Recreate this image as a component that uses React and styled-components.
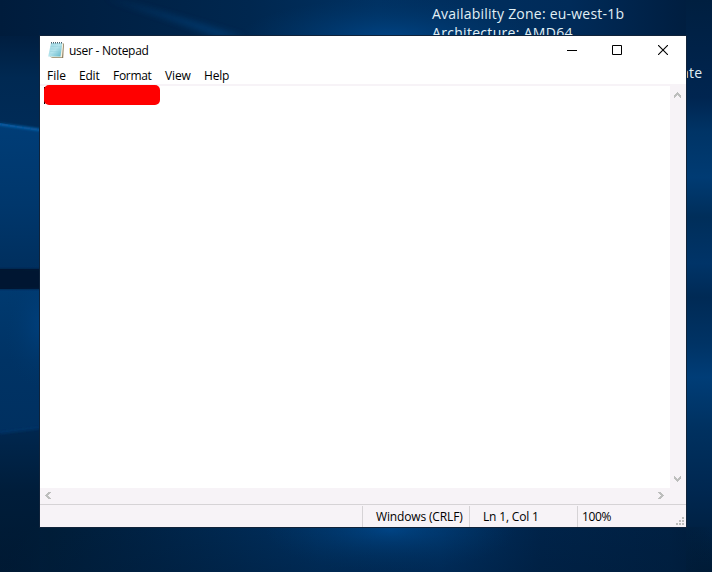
import React from "react";
import styled, { createGlobalStyle } from "styled-components";

const Global = createGlobalStyle`
  *{box-sizing:border-box}
  html,body{margin:0;overflow:hidden}
`;
const Desktop = styled.main`
  position:relative;width:712px;height:572px;overflow:hidden;
  padding:36px 26px 45px 40px;background:#00264f;
  font:12px/16px "Open Sans",sans-serif;color:#000;
`;
const Wallpaper = styled.svg`position:absolute;inset:0;display:block;`;
const DesktopText = styled.span`
  position:absolute;left:${p => p.$x}px;top:${p => p.$y}px;
  font:14px/20px "Open Sans",sans-serif;color:#e0f0f5;white-space:nowrap;
  letter-spacing:${p => p.$spacing || 0}px;
`;
const Window = styled.section`
  position:relative;width:646px;height:491px;background:#fff;
  box-shadow:0 0 0 1px #10233a;display:flex;flex-direction:column;
`;
const TitleBar = styled.header`height:30px;display:flex;align-items:flex-start;padding-left:8px;`;
const Title = styled.span`margin:7px 0 0 5px;flex:1;white-space:nowrap;letter-spacing:-.27px;`;
const AppIcon = styled.svg`display:block;margin-top:5px;`;
const Controls = styled.div`display:flex;`;
const WindowButton = styled.button`
  width:${p => p.$close ? 46 : 45}px;height:28px;border:0;background:none;
  padding:0 ${p => p.$close ? 0 : 1}px 0 0;
  display:flex;align-items:center;justify-content:center;
`;
const Menu = styled.nav`height:18px;display:flex;padding-left:7px;`;
const MenuItem = styled.span`width:${p => p.$w}px;line-height:20px;white-space:nowrap;letter-spacing:${p => p.$spacing || 0}px;`;
const Workspace = styled.div`
  height:404px;display:grid;grid-template-columns:630px 16px;
  border-top:2px solid #f7f3f7;
`;
const Editor = styled.div`position:relative;background:#fff;`;
const Caret = styled.i`position:absolute;left:4px;top:1px;width:1px;height:17px;background:#000;`;
const Redaction = styled.div`
  position:absolute;left:4px;top:-1px;width:116px;height:20px;border-radius:5px;background:#f00;
`;
const VerticalScroll = styled.div`
  background:#f7f3f7;display:flex;flex-direction:column;justify-content:space-between;
  align-items:flex-start;padding:6px 0 6px 4px;
`;
const HorizontalScroll = styled.div`
  height:16px;background:#f7f3f7;display:flex;justify-content:space-between;
  padding:4px 22px 0 5px;
`;
const Status = styled.footer`
  height:23px;border-top:1px solid #d6d3d6;background:#f7f3f7;
  display:grid;grid-template-columns:322px 107px 108px 1fr;
`;
const StatusCell = styled.span`
  margin:1px 0;border-left:${p => p.$plain ? "0" : "1px solid #d6d3d6"};
  padding-left:${p => p.$pad || 0}px;line-height:21px;white-space:nowrap;letter-spacing:${p => p.$spacing || 0}px;
`;
const ResizeGrip = styled.svg`position:absolute;right:2px;bottom:2px;display:block;`;

const arrows = {
  up: { w: 7, h: 6, d: "M3 0h1v1h1v1h1v1h1v3H6V5H5V4H4V3H3v1H2v1H1v1H0V3h1V2h1V1h1Z" },
  down: { w: 7, h: 6, d: "M0 0h1v1h1v1h1v1h1V2h1V1h1V0h1v3H6v1H5v1H4v1H3V5H2V4H1V3H0Z" },
  left: { w: 6, h: 7, d: "M0 3h1V2h1V1h1V0h3v1H5v1H4v1H3v1h1v1h1v1h1v1H3V6H2V5H1V4H0Z" },
  right: { w: 6, h: 7, d: "M6 3H5V2H4V1H3V0H0v1h1v1h1v1h1v1H2v1H1v1H0v1h3V6h1V5h1V4h1Z" }
};
const ScrollArrow = ({ direction }) => {
  const a = arrows[direction];
  return <svg width={a.w} height={a.h}><path d={a.d} fill="#bdbebd" /></svg>;
};
const NotepadIcon = () => (
  <AppIcon width="16" height="18" viewBox="0 0 16 18">
    <defs><linearGradient id="page" x2="1" y2="1"><stop stopColor="#9bd5e2"/><stop offset=".5" stopColor="#b5e4ed"/><stop offset="1" stopColor="#55b2c7"/></linearGradient></defs>
    <path d="M5 2.6h11l-.8 14.4H4.5L2 15.7Z" fill="#8f8063"/>
    <path d="M4.5 2.2h10.8L14 16.2 4 16.3 1 15Z" fill="#f5f1df"/>
    <path d="M3 2h11.3L12.5 15.5H.2Z" fill="url(#page)"/>
    <path d="m2.6 5.5 11 .2M2.3 8l11 .2M2 10.5l10.8.2M1.6 13l10.8.2" stroke="#8dcbd6" strokeWidth=".4"/>
    <path d="M3.5 2.5V1m2 1.5V1m2 1.5V1m2 1.5V1m2 1.5V1m2 1.5V1" stroke="#38515e" strokeWidth=".9"/>
  </AppIcon>
);
const DesktopWallpaper = () => (
  <Wallpaper width="712" height="572" viewBox="0 0 712 572" aria-hidden="true">
    <defs>
      <linearGradient id="base" x2="712" y2="0" gradientUnits="userSpaceOnUse"><stop stopColor="#001c3c"/><stop offset=".35" stopColor="#00274f"/><stop offset=".53" stopColor="#003162"/><stop offset=".8" stopColor="#002b59"/><stop offset=".95" stopColor="#001f42"/><stop offset="1" stopColor="#001c3b"/></linearGradient>
      <linearGradient id="leftTop" x1="0" y1="36" x2="0" y2="128" gradientUnits="userSpaceOnUse"><stop stopColor="#001e40"/><stop offset=".45" stopColor="#002952"/><stop offset="1" stopColor="#002b57"/></linearGradient>
      <linearGradient id="pane" x2="0" y2="1"><stop stopColor="#003d77"/><stop offset=".55" stopColor="#00376c"/><stop offset="1" stopColor="#002f5e"/></linearGradient>
      <linearGradient id="lower" x2="0" y2="1"><stop stopColor="#003a70"/><stop offset=".5" stopColor="#003365"/><stop offset="1" stopColor="#003060"/></linearGradient>
      <linearGradient id="floor" x2="0" y2="1"><stop stopColor="#00274f"/><stop offset=".45" stopColor="#001d3a"/><stop offset="1" stopColor="#001932"/></linearGradient>
      <linearGradient id="right" x1="0" y1="0" x2="0" y2="572" gradientUnits="userSpaceOnUse"><stop stopColor="#001f40"/><stop offset=".17" stopColor="#002550"/><stop offset=".23" stopColor="#003466"/><stop offset=".31" stopColor="#003b73"/><stop offset=".38" stopColor="#002e5a"/><stop offset=".46" stopColor="#003468"/><stop offset=".52" stopColor="#002a55"/><stop offset=".6" stopColor="#003365"/><stop offset=".66" stopColor="#003d77"/><stop offset=".75" stopColor="#003160"/><stop offset=".86" stopColor="#002750"/><stop offset="1" stopColor="#001b36"/></linearGradient>
      <linearGradient id="bottom"><stop stopColor="#001a34" stopOpacity="0"/><stop offset=".07" stopColor="#001d38"/><stop offset=".2" stopColor="#002244"/><stop offset=".45" stopColor="#002f5e"/><stop offset=".62" stopColor="#003062"/><stop offset=".76" stopColor="#002349"/><stop offset=".94" stopColor="#002042"/><stop offset="1" stopColor="#001b36" stopOpacity="0"/></linearGradient>
      <linearGradient id="bottomFade" x1="0" y1="527" x2="0" y2="572" gradientUnits="userSpaceOnUse"><stop stopColor="#001b38" stopOpacity="0"/><stop offset="1" stopColor="#001b38" stopOpacity=".3"/></linearGradient>
      <radialGradient id="glow"><stop stopColor="#004485"/><stop offset="1" stopColor="#003668" stopOpacity="0"/></radialGradient>
      <filter id="soft" x="-20%" y="-60%" width="140%" height="220%"><feGaussianBlur stdDeviation="3"/></filter>
      <filter id="line" x="-20%" y="-100%" width="140%" height="300%"><feGaussianBlur stdDeviation="1.2"/></filter>
    </defs>
    <path fill="url(#base)" d="M0 0h712v572H0z"/>
    <ellipse cx="390" cy="38" rx="150" ry="40" fill="url(#glow)"/>
    <path d="M105-2Q160 11 245 37H217Q158 14 105-2Z" fill="#004078" opacity=".7" filter="url(#soft)"/>
    <path d="M0 36h40v94L0 122Z" fill="url(#leftTop)"/>
    <path d="m0 123 40 7v139H0z" fill="url(#pane)"/>
    <path d="m-5 123.5 50 7" fill="none" stroke="#0860a9" strokeWidth="2.5" filter="url(#line)"/>
    <path d="M0 289h40v139l-40 5z" fill="url(#lower)"/>
    <ellipse cx="44" cy="325" rx="42" ry="65" fill="url(#glow)" opacity=".7"/>
    <path d="M-10 269h60v20h-60z" fill="#001633" filter="url(#line)"/>
    <path d="m0 433 40-5v144H0z" fill="url(#floor)"/>
    <path d="m0 433 40-5" stroke="#003668" strokeWidth="2" filter="url(#line)"/>
    <path d="M686 0h26v572h-26z" fill="url(#right)"/>
    <path d="M0 527h712v45H0z" fill="url(#bottom)"/>
    <ellipse cx="390" cy="530" rx="125" ry="42" fill="url(#glow)"/>
    <path d="M0 527h712v45H0z" fill="url(#bottomFade)"/>
  </Wallpaper>
);

export default function App() {
  return <><Global/><Desktop>
    <DesktopWallpaper/>
    <DesktopText $x={432} $y={4} $spacing={.22}>Availability Zone: eu-west-1b</DesktopText>
    <DesktopText $x={432} $y={23} $spacing={.3}>Architecture: AMD64</DesktopText>
    <DesktopText $x={681} $y={63} $spacing={.3}>ate</DesktopText>
    <Window>
      <TitleBar>
        <NotepadIcon/><Title>user - Notepad</Title>
        <Controls>
          <WindowButton aria-label="Minimize"><svg width="10" height="10"><path d="M0 5.5h10" stroke="#000"/></svg></WindowButton>
          <WindowButton aria-label="Maximize"><svg width="10" height="10"><path d="M.5.5h9v9h-9z" fill="none" stroke="#000"/></svg></WindowButton>
          <WindowButton $close aria-label="Close"><svg width="10" height="10"><path d="m0 0 10 10M10 0 0 10" stroke="#000" strokeWidth="1.1"/></svg></WindowButton>
        </Controls>
      </TitleBar>
      <Menu><MenuItem $w={32}>File</MenuItem><MenuItem $w={34} $spacing={-.2}>Edit</MenuItem><MenuItem $w={52} $spacing={-.3}>Format</MenuItem><MenuItem $w={39} $spacing={-.1}>View</MenuItem><MenuItem $spacing={-.2}>Help</MenuItem></Menu>
      <Workspace>
        <Editor><Caret/><Redaction/></Editor>
        <VerticalScroll><ScrollArrow direction="up"/><ScrollArrow direction="down"/></VerticalScroll>
      </Workspace>
      <HorizontalScroll><ScrollArrow direction="left"/><ScrollArrow direction="right"/></HorizontalScroll>
      <Status><StatusCell $plain/><StatusCell $pad={13} $spacing={-.15}>Windows (CRLF)</StatusCell><StatusCell $pad={13} $spacing={-.17}>Ln 1, Col 1</StatusCell><StatusCell $pad={4} $spacing={-.4}>100%</StatusCell></Status>
      <ResizeGrip width="8" height="8"><path d="M6 0h2v2H6zM3 3h2v2H3zM6 3h2v2H6zM0 6h2v2H0zM3 6h2v2H3zM6 6h2v2H6z" fill="#bdbebd"/></ResizeGrip>
    </Window>
  </Desktop></>;
}
